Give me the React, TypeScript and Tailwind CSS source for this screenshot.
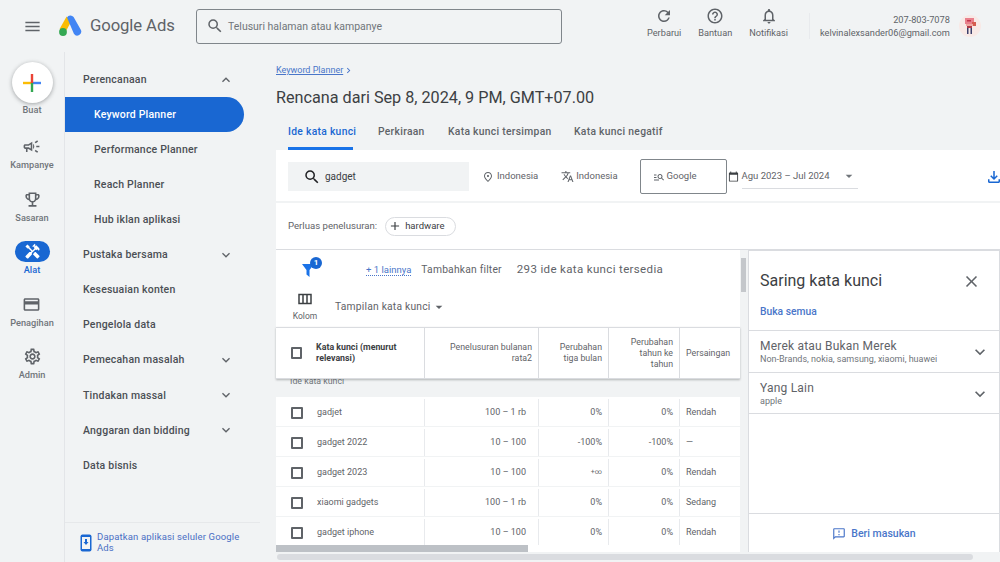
import type { ReactNode } from "react"
import {
  MdAdd,
  MdArrowDropDown,
  MdCalendarToday,
  MdChevronRight,
  MdClose,
  MdExpandLess,
  MdExpandMore,
  MdHandyman,
  MdHelpOutline,
  MdManageSearch,
  MdMenu,
  MdOutlineCampaign,
  MdOutlineEmojiEvents,
  MdOutlineFeedback,
  MdOutlineFileDownload,
  MdOutlineNotifications,
  MdOutlinePlace,
  MdOutlineSettings,
  MdOutlineViewColumn,
  MdPayment,
  MdRefresh,
  MdSearch,
  MdTranslate,
} from "react-icons/md"

type NavItem = {
  label: string
  sub?: boolean
  active?: boolean
  chevron?: "up" | "down"
}

const navItems: NavItem[] = [
  { label: "Perencanaan", chevron: "up" },
  { label: "Keyword Planner", sub: true, active: true },
  { label: "Performance Planner", sub: true },
  { label: "Reach Planner", sub: true },
  { label: "Hub iklan aplikasi", sub: true },
  { label: "Pustaka bersama", chevron: "down" },
  { label: "Kesesuaian konten" },
  { label: "Pengelola data" },
  { label: "Pemecahan masalah", chevron: "down" },
  { label: "Tindakan massal", chevron: "down" },
  { label: "Anggaran dan bidding", chevron: "down" },
  { label: "Data bisnis" },
]

const rows = [
  ["gadjet", "100 – 1 rb", "0%", "0%", "Rendah"],
  ["gadget 2022", "10 – 100", "-100%", "-100%", "—"],
  ["gadget 2023", "10 – 100", "+∞", "0%", "Rendah"],
  ["xiaomi gadgets", "100 – 1 rb", "0%", "0%", "Sedang"],
  ["gadget iphone", "10 – 100", "0%", "0%", "Rendah"],
]

function GoogleAdsLogo() {
  return (
    <svg width="24" height="22" viewBox="0 0 24 22">
      <path d="M8.6 1.6 L1.6 14 L6.6 18.4 L13 7 Z" fill="#fbbc04" />
      <path d="M9 2.4 a4 4 0 0 1 6.6 -.4 L22.8 14.8 a4 4 0 0 1 -6.9 4 Z" fill="#4285f4" />
      <circle cx="5" cy="17" r="3.9" fill="#34a853" />
    </svg>
  )
}

function CreateIcon() {
  return (
    <svg width="18" height="18" viewBox="0 0 18 18">
      <rect x="0" y="7.8" width="9" height="2.4" fill="#fbbc04" />
      <rect x="9" y="7.8" width="9" height="2.4" fill="#4285f4" />
      <rect x="7.8" y="0" width="2.4" height="9" fill="#ea4335" />
      <rect x="7.8" y="9" width="2.4" height="9" fill="#34a853" />
    </svg>
  )
}

function Avatar() {
  return (
    <div className="flex h-[22px] w-[22px] items-center justify-center rounded-full bg-[#f8e9e6]">
      <svg width="12" height="16" viewBox="0 0 12 16">
        <rect x="1" y="0" width="9" height="6" fill="#e9808c" />
        <rect x="3" y="2" width="4" height="1.500" fill="#c2344b" />
        <rect x="8" y="4" width="4" height="4" fill="#d65c4f" />
        <rect x="2" y="6" width="7" height="2" fill="#f0a7a0" />
        <rect x="3" y="8" width="5" height="2" fill="#b03a48" />
        <rect x="3" y="10" width="1.500" height="6" fill="#3b3f6b" />
        <rect x="6.500" y="10" width="1.500" height="6" fill="#3b3f6b" />
      </svg>
    </div>
  )
}

function RailItem({ icon, label, active }: { icon: ReactNode; label: string; active?: boolean }) {
  return (
    <div className="flex h-[52.600px] flex-col items-center">
      <div
        className={
          active
            ? "flex h-[21px] w-[35px] items-center justify-center rounded-full bg-[#1967d2] text-white"
            : "flex h-[21px] w-[35px] items-center justify-center text-[#5f6368]"
        }
      >
        {icon}
      </div>
      <span
        className={
          active
            ? "mt-[2px] text-[9.2px] font-medium leading-[12px] text-[#1967d2]"
            : "mt-[2px] text-[9.2px] font-medium leading-[12px] text-[#70757a]"
        }
      >
        {label}
      </span>
    </div>
  )
}

function HeaderAction({ icon, label }: { icon: ReactNode; label: string }) {
  return (
    <div className="flex flex-col items-center text-[#5f6368]">
      {icon}
      <span className="mt-[2px] text-[9.2px] leading-[12px]">{label}</span>
    </div>
  )
}

function Checkbox() {
  return <div className="h-[12px] w-[12px] rounded-[1px] border-2 border-[#5f6368]" />
}

export default function App() {
  return (
    <div className="flex h-[562px] w-[1000px] flex-col overflow-hidden bg-[#f1f3f4] font-['Roboto',sans-serif] text-[#3c4043]">
      <header className="flex h-[52px] shrink-0 items-center">
        <MdMenu className="ml-[23px] text-[19px] text-[#5f6368]" />
        <div className="ml-[16px]">
          <GoogleAdsLogo />
        </div>
        <span className="ml-[8px] w-[106px] text-[16.700px] leading-none tracking-[-0.1px] text-[#5f6368]">Google Ads</span>
        <div className="flex h-[35px] w-[366px] items-center rounded-[3px] border border-[#80868b]">
          <MdSearch className="ml-[9px] text-[18px] text-[#5f6368]" />
          <span className="ml-[4px] mt-[1px] text-[10.5px] text-[#70757a]">Telusuri halaman atau kampanye</span>
        </div>
        <div className="-mt-[6px] ml-[85px] flex w-[141px] justify-between">
          <HeaderAction icon={<MdRefresh className="text-[18px]" />} label="Perbarui" />
          <HeaderAction icon={<MdHelpOutline className="text-[18px]" />} label="Bantuan" />
          <HeaderAction icon={<MdOutlineNotifications className="text-[18px]" />} label="Notifikasi" />
        </div>
        <div className="ml-[21px] h-[26px] w-px bg-[#e8eaed]" />
        <div className="ml-[10px] flex flex-col items-end text-[9.2px] leading-[13px] text-[#5f6368]">
          <span>207-803-7078</span>
          <span>kelvinalexsander06@gmail.com</span>
        </div>
        <div className="ml-[9px]">
          <Avatar />
        </div>
      </header>

      <div className="flex min-h-0 flex-1">
        <aside className="flex w-[65px] shrink-0 flex-col items-center border-r border-[#e3e5e8] pt-[10px]">
          <div className="flex h-[41px] w-[41px] items-center justify-center rounded-full bg-white shadow-[0_1px_4px_rgba(60,64,67,0.45)]">
            <CreateIcon />
          </div>
          <span className="mt-[1px] mb-[20px] text-[9.2px] font-medium leading-[12px] text-[#70757a]">Buat</span>
          <RailItem icon={<MdOutlineCampaign className="text-[19px]" />} label="Kampanye" />
          <RailItem icon={<MdOutlineEmojiEvents className="text-[19px]" />} label="Sasaran" />
          <RailItem icon={<MdHandyman className="text-[17px]" />} label="Alat" active />
          <RailItem icon={<MdPayment className="text-[19px]" />} label="Penagihan" />
          <RailItem icon={<MdOutlineSettings className="text-[19px]" />} label="Admin" />
        </aside>

        <nav className="flex w-[195px] shrink-0 flex-col pt-[10px]">
          <div className="flex-1">
            {navItems.map((item) => (
              <div
                key={item.label}
                className={
                  item.active
                    ? "flex h-[35.100px] w-[179px] items-center rounded-r-full bg-[#1967d2] pl-[29px] text-[10.5px] font-medium text-white"
                    : item.sub
                      ? "flex h-[35.100px] w-[179px] items-center pl-[29px] text-[10.5px] font-medium text-[#4b4f54]"
                      : "flex h-[35.100px] w-[179px] items-center justify-between pl-[18px] pr-[10px] text-[10.5px] font-medium text-[#4b4f54]"
                }
              >
                <span className="tracking-[0.2px]">{item.label}</span>
                {item.chevron === "up" && <MdExpandLess className="text-[16px] text-[#5f6368]" />}
                {item.chevron === "down" && <MdExpandMore className="text-[16px] text-[#5f6368]" />}
              </div>
            ))}
          </div>
          <div className="flex h-[40px] items-start border-t border-[#e6e8ea] pl-[15px] pt-[8px]">
            <svg width="12" height="18" viewBox="0 0 12 18" className="mt-[3px] shrink-0">
              <rect x="0.500" y="0.500" width="11" height="17" rx="2" fill="#1967d2" />
              <rect x="2" y="3" width="8" height="12" fill="#f1f3f4" />
              <path d="M5 5h2v3h1.500L6 11 3.500 8H5Z" fill="#1967d2" />
            </svg>
            <span className="ml-[5px] w-[150px] text-[9.5px] leading-[11px] tracking-[0.15px] text-[#4a6fc4]">
              Dapatkan aplikasi seluler Google Ads
            </span>
          </div>
        </nav>

        <main className="flex min-w-0 flex-1 flex-col pl-[16px]">
          <div className="flex h-[98px] shrink-0 flex-col">
            <div className="mt-[13px] flex items-center text-[9px] leading-[11px] text-[#4a76c9] underline">
              Keyword Planner
              <MdChevronRight className="text-[11px]" />
            </div>
            <h1 className="mt-[11px] text-[16.2px] leading-[22px] text-[#3c4043]">Rencana dari Sep 8, 2024, 9 PM, GMT+07.00</h1>
            <div className="mt-[15px] flex text-[10.3px] font-medium leading-[16px] tracking-[0.3px] text-[#5f6368]">
              <div className="relative ml-[12px] w-[90px] text-[#1967d2]">
                Ide kata kunci
                <div className="absolute left-0 top-[23px] h-[2.500px] w-[65px] bg-[#1a73e8]" />
              </div>
              <div className="w-[70px]">Perkiraan</div>
              <div className="w-[126px]">Kata kunci tersimpan</div>
              <div>Kata kunci negatif</div>
            </div>
          </div>

          <section className="flex min-h-0 flex-1 flex-col bg-white">
            <div className="flex h-[53px] shrink-0 items-center border-b-2 border-[#f1f3f4] pl-[12px] pt-[2px]">
              <div className="flex h-[29px] w-[181px] items-center bg-[#f1f3f4] pl-[15px]">
                <MdSearch className="text-[18px] text-[#202124]" />
                <span className="ml-[4px] text-[10px] text-[#3c4043]">gadget</span>
              </div>
              <MdOutlinePlace className="ml-[13px] text-[12px] text-[#5f6368]" />
              <span className="ml-[3px] text-[9.5px] text-[#5f6368]">Indonesia</span>
              <MdTranslate className="ml-[23px] text-[13px] text-[#5f6368]" />
              <span className="ml-[2px] text-[9.5px] text-[#5f6368]">Indonesia</span>
              <div className="ml-[22px] flex h-[35px] w-[87px] items-center rounded-[2px] border border-[#80868b] pl-[12px]">
                <MdManageSearch className="text-[12px] text-[#5f6368]" />
                <span className="ml-[2px] text-[9.5px] text-[#5f6368]">Google</span>
              </div>
              <MdCalendarToday className="ml-[1px] text-[11px] text-[#3c4043]" />
              <div className="ml-[3px] flex h-[25px] w-[116px] items-center border-b border-[#dadce0]">
                <span className="text-[9.5px] text-[#5f6368]">Agu 2023 – Jul 2024</span>
                <MdArrowDropDown className="ml-[11px] text-[16px] text-[#70757a]" />
              </div>
              <MdOutlineFileDownload className="-mr-[3px] ml-auto text-[18px] text-[#1967d2]" />
            </div>

            <div className="flex h-[47px] shrink-0 items-center border-b border-[#dadce0] pl-[12px]">
              <span className="text-[9.6px] text-[#5f6368]">Perluas penelusuran:</span>
              <div className="ml-[8px] flex h-[19px] w-[71px] items-center rounded-full border border-[#dadce0] pl-[2px]">
                <MdAdd className="text-[14px] text-[#3c4043]" />
                <span className="ml-[3px] text-[9.5px] text-[#3c4043]">hardware</span>
              </div>
            </div>

            <div className="flex min-h-0 flex-1">
              <div className="flex w-[464px] shrink-0 flex-col">
                <div className="flex h-[38px] shrink-0 items-center pt-[2px]">
                  <div className="relative ml-[26px] h-[14px] w-[64px]">
                    <svg width="12" height="14" viewBox="0 0 12 14">
                      <path d="M0 1H12L7.500 7V14L4.500 11.500V7Z" fill="#1a73e8" />
                    </svg>
                    <div className="absolute left-[8px] top-[-6px] flex h-[12px] w-[12px] items-center justify-center rounded-full bg-[#1967d2] text-[8px] font-bold text-white">
                      1
                    </div>
                  </div>
                  <span className="border-b border-dotted border-[#4a76c9] text-[9.5px] leading-[11px] text-[#4a76c9]">+ 1 lainnya</span>
                  <span className="ml-[10px] text-[10.3px] tracking-[0.2px] text-[#5f6368]">Tambahkan filter</span>
                  <span className="ml-[15px] text-[11.5px] tracking-[0.35px] text-[#5f6368]">293 ide kata kunci tersedia</span>
                </div>
                <div className="flex h-[39px] shrink-0 items-center">
                  <div className="ml-[15px] mt-[2px] flex w-[28px] flex-col items-center self-start text-[#5f6368]">
                    <MdOutlineViewColumn className="text-[18px] text-[#3c4043]" />
                    <span className="mt-[3px] text-[8.5px] leading-[10px]">Kolom</span>
                  </div>
                  <span className="-mt-[2px] ml-[16px] text-[10.3px] tracking-[0.2px] text-[#5f6368]">Tampilan kata kunci</span>
                  <MdArrowDropDown className="-mt-[2px] ml-[1px] text-[16px] text-[#5f6368]" />
                </div>
                <div className="z-10 flex h-[52px] shrink-0 border-b border-t border-[#dadce0] bg-white text-[8.8px] leading-[11px] text-[#5f6368] shadow-[0_1px_2px_rgba(60,64,67,0.35)]">
                  <div className="flex w-[149px] items-center border-r border-[#dadce0] pl-[15px]">
                    <Checkbox />
                    <span className="ml-[14px] font-bold text-[#3c4043]">Kata kunci (menurut relevansi)</span>
                  </div>
                  <div className="flex w-[114px] items-center justify-end border-r border-[#dadce0] pr-[6px] text-right">
                    <span className="w-[90px]">Penelusuran bulanan rata2</span>
                  </div>
                  <div className="flex w-[70px] items-center justify-end border-r border-[#dadce0] pr-[6px] text-right">
                    <span className="w-[48px]">Perubahan tiga bulan</span>
                  </div>
                  <div className="flex w-[71px] items-center justify-end border-r border-[#dadce0] pr-[6px] text-right">
                    <span className="w-[45px]">Perubahan tahun ke tahun</span>
                  </div>
                  <div className="flex flex-1 items-center pl-[6px]">Persaingan</div>
                </div>
                <div className="min-h-0 flex-1 overflow-hidden bg-[#f1f3f4]">
                  <div className="-mt-[2px] h-[20px] pl-[14px] text-[8.8px] leading-[8px] text-[#70757a]">Ide kata kunci</div>
                  {rows.map((row) => (
                    <div key={row[0]} className="mb-px flex h-[29px] bg-white pt-[2px] text-[9px] text-[#5f6368]">
                      <div className="flex w-[149px] items-center border-r border-[#e8eaed] pl-[15px]">
                        <Checkbox />
                        <span className="ml-[14px]">{row[0]}</span>
                      </div>
                      <div className="flex w-[114px] items-center justify-end border-r border-[#e8eaed] pr-[12px]">{row[1]}</div>
                      <div className={row[2] === "+∞" ? "flex w-[70px] items-center justify-end border-r border-[#e8eaed] pr-[6px] text-[7px]" : "flex w-[70px] items-center justify-end border-r border-[#e8eaed] pr-[6px]"}>
                        {row[2]}
                      </div>
                      <div className="flex w-[71px] items-center justify-end border-r border-[#e8eaed] pr-[6px]">{row[3]}</div>
                      <div className="flex flex-1 items-center pl-[6px]">{row[4]}</div>
                    </div>
                  ))}
                </div>
                <div className="h-[7px] shrink-0 bg-white">
                  <div className="h-full w-[252px] bg-[#bdc1c6]" />
                </div>
              </div>
              <div className="w-[8px] shrink-0 bg-[#f1f3f4]">
                <div className="mt-[8px] ml-[1px] h-[34px] w-[5px] bg-[#c4c7cb]" />
              </div>
              <aside className="flex min-w-0 flex-1 flex-col border-x border-t border-[#dadce0] bg-white">
                <div className="flex h-[79px] shrink-0 flex-col pl-[11px]">
                  <div className="mt-[19px] flex items-center justify-between pr-[18px]">
                    <span className="text-[16px] leading-[22px] text-[#3c4043]">Saring kata kunci</span>
                    <MdClose className="text-[19px] text-[#5f6368]" />
                  </div>
                  <span className="mt-[12px] text-[10.3px] font-medium text-[#4a76c9]">Buka semua</span>
                </div>
                <div className="flex h-[42px] shrink-0 items-center justify-between border-t border-[#dadce0] pl-[11px] pr-[9px] pt-[1px]">
                  <div className="flex flex-col">
                    <span className="text-[12px] leading-[14px] tracking-[0.2px] text-[#5f6368]">Merek atau Bukan Merek</span>
                    <span className="text-[9px] leading-[12px] text-[#70757a]">Non-Brands, nokia, samsung, xiaomi, huawei</span>
                  </div>
                  <MdExpandMore className="text-[20px] text-[#5f6368]" />
                </div>
                <div className="flex h-[42px] shrink-0 items-center justify-between border-y border-[#dadce0] pl-[11px] pr-[9px] pt-[1px]">
                  <div className="flex flex-col">
                    <span className="text-[12px] leading-[14px] tracking-[0.2px] text-[#5f6368]">Yang Lain</span>
                    <span className="text-[9px] leading-[12px] text-[#70757a]">apple</span>
                  </div>
                  <MdExpandMore className="text-[20px] text-[#5f6368]" />
                </div>
                <div className="flex-1" />
                <div className="flex h-[39px] shrink-0 items-center justify-center border-t border-[#dadce0] pt-[2px] text-[#4a76c9]">
                  <MdOutlineFeedback className="text-[14px]" />
                  <span className="ml-[5px] text-[10.5px] font-medium">Beri masukan</span>
                </div>
              </aside>
            </div>
            <div className="flex h-[10px] shrink-0 items-center bg-[#f1f3f4]">
              <div className="ml-[1px] h-[6px] w-[696px] rounded-full bg-[#dadce0]" />
            </div>
          </section>
        </main>
      </div>
    </div>
  )
}
